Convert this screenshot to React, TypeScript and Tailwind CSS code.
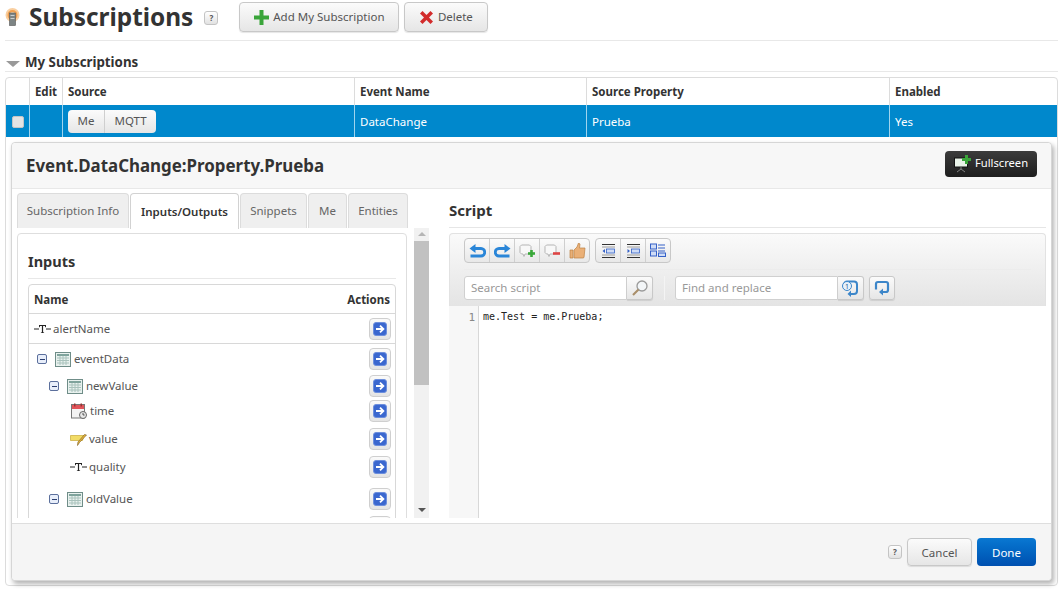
import type { ReactNode } from "react";

const font = { fontFamily: '"Noto Sans", sans-serif' };
const mono = { fontFamily: '"DejaVu Sans Mono", monospace' };

function HelpBadge() {
  return (
    <span className="flex h-[14px] w-[14px] items-center justify-center rounded-[3px] border border-[#c4c4c4] bg-gradient-to-b from-white to-[#e2e2e2] text-[8px] font-bold leading-none text-[#555]">
      ?
    </span>
  );
}

function GrayButton({ children, className = "" }: { children: ReactNode; className?: string }) {
  return (
    <button className={`flex items-center justify-center rounded-[3px] border border-[#c8c8c8] bg-gradient-to-b from-[#fbfbfb] to-[#e6e6e6] text-[11.5px] text-[#555] shadow-[0_1px_1px_rgba(0,0,0,0.1)] ${className}`}>
      {children}
    </button>
  );
}

function BeaconIcon() {
  return (
    <svg width="15" height="18" viewBox="0 0 15 18">
      <circle cx="7.5" cy="7" r="7" fill="#f9cfa0" />
      <circle cx="7.5" cy="7" r="5" fill="#f0a050" />
      <circle cx="7.5" cy="7" r="3" fill="#fbdcb4" />
      <rect x="4.5" y="5" width="6" height="12.500" fill="#7d8484" stroke="#555" strokeWidth="0.6" />
      <rect x="5.500" y="7" width="4" height="1" fill="#c9cdcd" />
      <rect x="5.500" y="10" width="4" height="1" fill="#c9cdcd" />
    </svg>
  );
}

function DataTypeText() {
  return (
    <svg width="17" height="10" viewBox="0 0 17 10">
      <path d="M0 5h5M12 5h5" stroke="#222" strokeWidth="1" />
      <path d="M5 1h7v2.200h-.7l-.4-1.200H9.100v6.200l1 .4V9H6.900v-.4l1-.4V2H6.100l-.4 1.200H5z" fill="#222" />
    </svg>
  );
}

function GridIcon() {
  return (
    <svg width="16" height="15" viewBox="0 0 16 15">
      <rect x="0.5" y="0.5" width="15" height="14" fill="#e8f1ee" stroke="#6f8d88" />
      <rect x="2" y="2" width="12" height="2" fill="#7fa39c" />
      <path d="M2 6h12M2 8.500h12M2 11h12M5 4v9M8 4v9M11 4v9" stroke="#a9c2bc" strokeWidth="1" />
    </svg>
  );
}

function CalendarIcon() {
  return (
    <svg width="16" height="16" viewBox="0 0 16 16">
      <rect x="0.5" y="1.5" width="13" height="13.5" fill="#f3f3f3" stroke="#777" />
      <rect x="1" y="2" width="12" height="4" fill="#e2545a" />
      <rect x="3" y="0.5" width="1.5" height="3" fill="#933" />
      <rect x="9.5" y="0.5" width="1.5" height="3" fill="#933" />
      <circle cx="12" cy="12" r="3.5" fill="#e8e8e8" stroke="#666" />
      <path d="M12 10v2h1.600" stroke="#333" strokeWidth="0.8" fill="none" />
    </svg>
  );
}

function NoteIcon() {
  return (
    <svg width="17" height="13" viewBox="0 0 17 13">
      <path d="M0.500 2.500h13.500l-1.500 5H0.500z" fill="#f2dc66" stroke="#c8a93a" strokeWidth="0.7" />
      <path d="M16.500 2 9.500 9.500 7.500 12.500l.4-3.400L14.500 1.500z" fill="#e2b23f" stroke="#7a5b1c" strokeWidth="0.6" />
    </svg>
  );
}

function Toggle() {
  return (
    <span className="box-content flex h-[8px] w-[8px] items-center justify-center rounded-[2px] border border-[#5b6f9c] bg-[#e8eefa]">
      <span className="h-px w-[5px] bg-[#2c3f70]" />
    </span>
  );
}

function ActionButton() {
  return (
    <span className="flex h-[22px] w-[22px] shrink-0 items-center justify-center rounded-[4px] border border-[#cfcfcf] bg-gradient-to-b from-[#fafafa] to-[#e4e4e4]">
      <svg width="14" height="14" viewBox="0 0 14 14">
        <rect x="0.500" y="0.500" width="13" height="13" rx="2.500" fill="#3a67cf" stroke="#6d8fdd" />
        <path d="M3 7h7M7 3.600 10.400 7 7 10.400" stroke="#fff" strokeWidth="1.800" fill="none" />
      </svg>
    </span>
  );
}

function ToolButton({ children, last }: { children: ReactNode; last?: boolean }) {
  return (
    <span className={`flex h-full flex-1 items-center justify-center ${last ? "" : "border-r border-[#cfcfcf]"}`}>
      {children}
    </span>
  );
}

const Undo = () => (
  <svg width="17" height="16" viewBox="0 0 17 16">
    <path d="M4 5.500h8a3.200 3.200 0 0 1 0 7.500H1.500" stroke="#2a86d8" strokeWidth="2.800" fill="none" />
    <path d="M6.500 1 0.500 5.500l6 4.500z" fill="#2a86d8" />
  </svg>
);
const Redo = () => (
  <svg width="17" height="16" viewBox="0 0 17 16">
    <path d="M13 5.500H5a3.200 3.200 0 0 0 0 7.500h10.500" stroke="#2a86d8" strokeWidth="2.800" fill="none" />
    <path d="M10.500 1l6 4.500-6 4.500z" fill="#2a86d8" />
  </svg>
);
const Bubble = ({ color, plus }: { color: string; plus?: boolean }) => (
  <svg width="16" height="15" viewBox="0 0 16 15">
    <path d="M2.500 2h8l1.500 1.500v6L10.500 11H6l-1 2.500L4 11H2.500L1 9.500v-6z" fill="#f8f8f8" stroke="#b5b5b5" />
    <rect x="9" y="9.200" width="7" height="2.600" fill={color} />
    {plus && <rect x="11.200" y="7" width="2.600" height="7" fill={color} />}
  </svg>
);
const Thumb = () => (
  <svg width="17" height="16" viewBox="0 0 17 16">
    <path d="M1 7h3v8H1zM5 7l3-3 1.500-4 1.500 1-.5 4H16l-1 9.500-1 .5H5z" fill="#eab077" stroke="#bb8144" strokeWidth="0.7" />
  </svg>
);
const Indent = ({ flip }: { flip?: boolean }) => (
  <svg width="15" height="16" viewBox="0 0 15 16">
    <path d="M1 1.500h13M1 14.500h13" stroke="#333" strokeWidth="1" />
    <path d="M1 4h13M1 12h13" stroke="#777" strokeWidth="0.700" />
    <rect x="5.500" y="6" width="8" height="4" fill="#cfdcf6" stroke="#3461c8" strokeWidth="0.800" />
    <path d={flip ? "M1.500 6l2.500 2-2.500 2z" : "M4 6L1.500 8 4 10z"} fill="#3461c8" />
  </svg>
);
const Format = () => (
  <svg width="16" height="15" viewBox="0 0 16 15">
    <rect x="0.500" y="1" width="6" height="5" fill="#cfdcf6" stroke="#3461c8" />
    <rect x="0.500" y="8" width="6" height="5" fill="#cfdcf6" stroke="#3461c8" />
    <path d="M8 2h7M8 5h7M8 8h7" stroke="#3461c8" strokeWidth="1.200" />
    <rect x="8.500" y="10" width="7" height="3.500" fill="#cfdcf6" stroke="#3461c8" />
  </svg>
);
const Magnifier = () => (
  <svg width="18" height="18" viewBox="0 0 18 18">
    <circle cx="11" cy="7" r="5" fill="#f3f6f8" stroke="#9a9a9a" strokeWidth="1.300" />
    <path d="M7.500 10.500 2 16" stroke="#a98f6a" strokeWidth="2.200" />
  </svg>
);
const ReplaceOne = () => (
  <svg width="17" height="17" viewBox="0 0 17 17">
    <path d="M2 7V4.500A3 3 0 0 1 5 1.500h7a3 3 0 0 1 3 3V11a3 3 0 0 1-3 3H7" stroke="#3c86c9" strokeWidth="2" fill="none" />
    <circle cx="5" cy="6" r="4.500" fill="#e8f2fb" stroke="#3c86c9" />
    <text x="5" y="8.500" fontSize="7" textAnchor="middle" fill="#245a90" style={font}>1</text>
    <path d="M9 10.500 5.500 14 9 17z" fill="#3c86c9" />
  </svg>
);
const ReplaceAll = () => (
  <svg width="16" height="16" viewBox="0 0 16 16">
    <path d="M2 9.500V4a2 2 0 0 1 2-2h8a2 2 0 0 1 2 2v6a2 2 0 0 1-2 2H7" stroke="#3c86c9" strokeWidth="2.200" fill="none" />
    <path d="M9 8.500 5 12l4 3.500z" fill="#3c86c9" />
  </svg>
);

const treeRows = [
  { name: "eventData", pad: "pl-[8px]", icon: <GridIcon />, toggle: true, h: "h-[28px]", mt: "mt-[1px]", gap: "mr-[3px]" },
  { name: "newValue", pad: "pl-[20px]", icon: <GridIcon />, toggle: true, h: "h-[26px]", mt: "mt-0", gap: "mr-[3px]" },
  { name: "time", pad: "pl-[42px]", icon: <CalendarIcon />, toggle: false, h: "h-[24px]", mt: "mt-0", gap: "mr-[3px]" },
  { name: "value", pad: "pl-[41px]", icon: <NoteIcon />, toggle: false, h: "h-[28px]", mt: "mt-[2px]", gap: "mr-[2px]" },
  { name: "quality", pad: "pl-[41px]", icon: <DataTypeText />, toggle: false, h: "h-[28px]", mt: "mt-0", gap: "mr-[2px]" },
  { name: "oldValue", pad: "pl-[20px]", icon: <GridIcon />, toggle: true, h: "h-[28px]", mt: "mt-[4px]", gap: "mr-[3px]" },
  { name: "", pad: "pl-[42px]", icon: <CalendarIcon />, toggle: false, h: "h-[28px]", mt: "mt-0", gap: "mr-[3px]" },
];

const tabs = [
  { label: "Subscription Info", w: "w-[112px]" },
  { label: "Inputs/Outputs", w: "w-[109px]", active: true },
  { label: "Snippets", w: "w-[67px]" },
  { label: "Me", w: "w-[39px]" },
  { label: "Entities", w: "w-[60px]" },
];

function LeftPane() {
  return (
    <div className="flex w-[412px] shrink-0 flex-col">
      <div className="flex h-[35px] gap-[1px]">
        {tabs.map((t) =>
          t.active ? (
            <div key={t.label} className={`${t.w} relative z-10 flex h-[36px] items-center justify-center rounded-t-[4px] border border-b-0 border-[#d2d2d2] bg-white text-[11.5px] font-semibold text-[#333]`}>
              {t.label}
            </div>
          ) : (
            <div key={t.label} className={`${t.w} flex items-center justify-center rounded-t-[4px] border border-b-0 border-[#dcdcdc] bg-[#efefef] text-[11.5px] text-[#666]`}>
              {t.label}
            </div>
          ),
        )}
      </div>
      <div className="flex min-h-0 flex-1">
        <div className="mt-[5px] h-[320px] w-[390px] shrink-0 rounded-t-[4px] border border-[#dedede] bg-white px-[10px]">
          <div className="flex h-[45px] items-end border-b border-[#e8e8e8] pb-[7px] text-[14.5px] font-bold leading-[20px] text-[#333]">
            Inputs
          </div>
          <div className="mt-[5px] rounded-t-[4px] border border-[#d8d8d8]">
            <div className="flex h-[29px] items-center justify-between border-b border-[#d8d8d8] px-[5px] pt-[2px] text-[11.5px] font-bold text-[#333]">
              <span>Name</span>
              <span>Actions</span>
            </div>
            <div className="flex h-[30px] items-center justify-between border-b border-[#d8d8d8] pl-[5px] pr-[4px] text-[11.5px] text-[#555]">
              <span className="flex items-center gap-[2px]">
                <DataTypeText />
                alertName
              </span>
              <ActionButton />
            </div>
            {treeRows.map((r) => (
              <div key={r.name || "next"} className={`flex ${r.h} ${r.mt} items-center justify-between pr-[4px] text-[11.5px] text-[#555] ${r.pad}`}>
                <span className="flex items-center">
                  {r.toggle && <span className="mr-[8px]"><Toggle /></span>}
                  <span className={r.gap}>{r.icon}</span>
                  {r.name}
                </span>
                <ActionButton />
              </div>
            ))}
          </div>
        </div>
        <div className="ml-[7px] flex w-[15px] shrink-0 flex-col items-center bg-[#f1f1f1]">
          <span className="mt-[4px] h-0 w-0 border-x-[4px] border-b-[4px] border-x-transparent border-b-[#b5b5b5]" />
          <span className="mt-[5px] h-[144px] w-full bg-[#c1c1c1]" />
          <span className="mb-[6px] mt-auto h-0 w-0 border-x-[4px] border-t-[4px] border-x-transparent border-t-[#555]" />
        </div>
      </div>
    </div>
  );
}

function ScriptPane() {
  return (
    <div className="ml-[20px] flex min-w-0 flex-1 flex-col">
      <div className="flex h-[35px] items-center border-b border-[#e6e6e6] text-[15px] font-bold leading-[20px] text-[#333]">
        Script
      </div>
      <div className="mt-[5px] h-[73px] rounded-t-[4px] border border-b-0 border-[#e2e2e2] bg-gradient-to-b from-[#fafafa] to-[#e4e4e4] px-[14px] pt-[4px]">
        <div className="flex h-[26px] gap-[5px]">
          <div className="flex h-[25px] w-[126px] items-center rounded-[4px] border border-[#c8c8c8] bg-gradient-to-b from-[#fbfbfb] to-[#e8e8e8]">
            <ToolButton><Undo /></ToolButton>
            <ToolButton><Redo /></ToolButton>
            <ToolButton><Bubble color="#3aa83a" plus /></ToolButton>
            <ToolButton><Bubble color="#d44" /></ToolButton>
            <ToolButton last><Thumb /></ToolButton>
          </div>
          <div className="flex h-[25px] w-[76px] items-center rounded-[4px] border border-[#c8c8c8] bg-gradient-to-b from-[#fbfbfb] to-[#e8e8e8]">
            <ToolButton><Indent /></ToolButton>
            <ToolButton><Indent flip /></ToolButton>
            <ToolButton last><Format /></ToolButton>
          </div>
        </div>
        <div className="mt-[5px] border-t border-[#ececec] pt-[6px]">
          <div className="flex h-[24px] items-center">
            <div className="flex h-[24px] w-[163px] items-center rounded-l-[3px] border border-[#d0d0d0] bg-white pl-[6px] text-[11.5px] text-[#999]">
              Search script
            </div>
            <GrayButton className="h-[24px] w-[26px] rounded-l-none border-l-0"><Magnifier /></GrayButton>
            <span className="ml-[11px] mr-[10px] h-[24px] w-px bg-[#f4f4f4]" />
            <div className="flex h-[24px] w-[163px] items-center rounded-l-[3px] border border-[#d0d0d0] bg-white pl-[6px] text-[11.5px] text-[#999]">
              Find and replace
            </div>
            <GrayButton className="h-[24px] w-[26px] rounded-l-none border-l-0"><ReplaceOne /></GrayButton>
            <GrayButton className="ml-[5px] h-[24px] w-[26px]"><ReplaceAll /></GrayButton>
          </div>
        </div>
      </div>
      <div className="flex min-h-0 flex-1 bg-white">
        <div className="flex w-[30px] shrink-0 justify-end border-r border-[#d8d8d8] bg-[#f7f7f7] pr-[3px] pt-[5px] text-[11px] leading-[14px] text-[#888]" style={mono}>
          1
        </div>
        <div className="pl-[4px] pt-[4px] text-[10px] leading-[14px] text-[#222]" style={mono}>
          me.Test = me.Prueba;
        </div>
      </div>
    </div>
  );
}

export default function App() {
  return (
    <div className="h-[591px] w-[1063px] overflow-hidden bg-white" style={font}>
      <div className="ml-[5px] flex h-[41px] w-[1053px] items-center border-b border-[#e8e8e8] pb-[7px]">
        <BeaconIcon />
        <h1 className="ml-[9px] text-[24.4px] font-bold leading-[32px] text-[#333]">Subscriptions</h1>
        <span className="ml-[11px] mt-[3px]"><HelpBadge /></span>
        <GrayButton className="ml-[21px] mt-[1px] h-[30px] w-[160px] gap-[4px] rounded-[4px]">
          <svg width="15" height="15" viewBox="0 0 15 15">
            <path d="M5.500 0h4v5.500H15v4H9.500V15h-4V9.500H0v-4h5.500z" fill="#3aa53a" />
          </svg>
          Add My Subscription
        </GrayButton>
        <GrayButton className="ml-[5px] mt-[1px] h-[30px] w-[84px] gap-[5px] rounded-[4px]">
          <svg width="13" height="13" viewBox="0 0 13 13">
            <path d="M2.500 0 6.500 4l4-4L13 2.500l-4 4 4 4-2.500 2.500-4-4-4 4L0 10.500l4-4-4-4z" fill="#d22b2b" />
          </svg>
          Delete
        </GrayButton>
      </div>

      <div className="ml-[5px] flex h-[31px] w-[1053px] items-end border-b border-[#e8e8e8]">
        <span className="mb-[4px] ml-[1px] h-0 w-0 border-x-[7px] border-t-[6px] border-x-transparent border-t-[#999]" />
        <span className="ml-[5px] text-[13.3px] font-bold leading-[18px] text-[#333]">My Subscriptions</span>
      </div>

      <div className="ml-[5px] mt-[5px] h-[509px] w-[1053px] rounded-[4px] border border-[#dcdcdc]">
        <div className="flex h-[27px] items-center text-[11.5px] font-bold text-[#333]">
          <span className="h-full w-[24px] border-r border-[#dcdcdc]" />
          <span className="flex h-full w-[33px] items-center justify-center border-r border-[#dcdcdc]">Edit</span>
          <span className="flex h-full w-[292px] items-center border-r border-[#dcdcdc] pl-[5px]">Source</span>
          <span className="flex h-full w-[232px] items-center border-r border-[#dcdcdc] pl-[5px]">Event Name</span>
          <span className="flex h-full w-[303px] items-center border-r border-[#dcdcdc] pl-[5px]">Source Property</span>
          <span className="flex h-full flex-1 items-center pl-[5px]">Enabled</span>
        </div>
        <div className="flex h-[32px] items-center bg-[#0088cc] text-[11.5px] text-white">
          <span className="flex h-full w-[24px] items-center justify-center border-r border-[#9fd4ee] pt-[2px]">
            <span className="h-[12px] w-[12px] rounded-[2px] border border-[#c5c5c5] bg-[#e4e4e4]" />
          </span>
          <span className="h-full w-[33px] border-r border-[#9fd4ee]" />
          <span className="flex h-full w-[292px] items-center border-r border-[#9fd4ee] pl-[5px]">
            <span className="flex h-[23px] items-center rounded-[4px] bg-gradient-to-b from-[#fbfbfb] to-[#e6e6e6] text-[11.5px] text-[#555]">
              <span className="flex h-full w-[37px] items-center justify-center border-r border-[#cfcfcf]">Me</span>
              <span className="flex h-full w-[51px] items-center justify-center">MQTT</span>
            </span>
          </span>
          <span className="flex h-full w-[232px] items-center border-r border-[#9fd4ee] pl-[5px] pt-[2px]">DataChange</span>
          <span className="flex h-full w-[303px] items-center border-r border-[#9fd4ee] pl-[5px] pt-[2px]">Prueba</span>
          <span className="flex h-full flex-1 items-center pl-[5px] pt-[2px]">Yes</span>
        </div>

        <div className="ml-[5px] mt-[5px] flex h-[439px] w-[1041px] flex-col rounded-[4px] border border-[#d6d6d6] bg-white shadow-[2px_3px_5px_rgba(0,0,0,0.3)]">
          <div className="flex h-[46px] shrink-0 items-center justify-between rounded-t-[4px] border-b border-[#e8e8e8] bg-[#f7f7f7] pl-[14px] pr-[14px]">
            <span className="text-[16.9px] font-bold leading-[22px] text-[#333]">Event.DataChange:Property.Prueba</span>
            <button className="mb-[4px] flex h-[26px] w-[92px] items-center justify-center gap-[3px] rounded-[4px] bg-gradient-to-b from-[#3c3c3c] to-[#1e1e1e] text-[11.2px] text-white">
              <svg width="18" height="18" viewBox="0 0 18 18">
                <rect x="0.500" y="3" width="13" height="9" fill="#e8f2e8" stroke="#111" />
                <path d="M7 12v2M7 14l-4 3M7 14l4 3" stroke="#999" strokeWidth="0.800" />
                <path d="M11 0h3v3h3v3h-3v3h-3V6H8V3h3z" fill="#3aa53a" />
              </svg>
              Fullscreen
            </button>
          </div>
          <div className="flex min-h-0 flex-1 px-[5px] pb-[5px] pt-[4px]">
            <div className="flex min-h-0 flex-1 overflow-hidden">
              <LeftPane />
              <ScriptPane />
            </div>
          </div>
          <div className="flex h-[57px] shrink-0 items-center justify-end rounded-b-[4px] border-t border-[#dedede] bg-[#f5f5f5] pr-[15px]">
            <HelpBadge />
            <GrayButton className="ml-[5px] h-[28px] w-[65px] rounded-[4px] pt-[1px]">Cancel</GrayButton>
            <button className="ml-[5px] h-[28px] w-[59px] rounded-[4px] bg-gradient-to-b from-[#0a78d2] to-[#0050b0] pt-[1px] text-[11.5px] text-white">Done</button>
          </div>
        </div>
      </div>
    </div>
  );
}
